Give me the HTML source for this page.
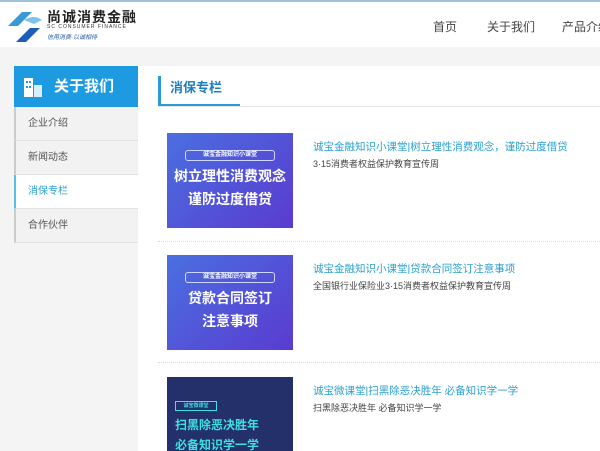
<!DOCTYPE html>
<html><head><meta charset="utf-8"><style>
*{margin:0;padding:0;box-sizing:border-box}
html,body{width:600px;height:451px;overflow:hidden}
body{background:#f4f4f4;font-family:"Liberation Sans","Noto Sans CJK SC",sans-serif;position:relative}
.hdr{position:absolute;left:0;top:0;width:600px;height:47px;background:#fff;border-top:2px solid #9fc3d6}
.nav{position:absolute;top:16px;font-size:12px;color:#444;white-space:nowrap}
.side{position:absolute;left:14px;top:66px;width:124px}
.sh{height:41px;background:#1e9be0;color:#fff;font-size:15px;font-weight:bold;line-height:41px;padding-left:40px;position:relative}
.mi{height:34px;background:#f2f2f2;border-left:2px solid #ccc;border-bottom:1px solid #e2e2e2;font-size:10px;color:#555;line-height:33px;padding-left:12px}
.mi.on{background:#fff;color:#2aa0d0;border-left-color:#5bbfe0}
.main{position:absolute;left:138px;top:66px;width:462px;height:385px;background:#fff;overflow:hidden}
.tt{position:absolute;left:20px;top:10px;height:30px;border-left:3px solid #2a9bd8;padding-left:9px;font-size:13px;font-weight:bold;color:#1b7fc0;line-height:24px}
.ul{position:absolute;left:20px;top:38px;width:82px;height:2px;background:#2a9bd8}
.gl{position:absolute;left:20px;top:40px;width:442px;height:1px;background:#e5e5e5}
.item{position:absolute;left:29px;width:433px}
.img{position:absolute;left:0;top:0;width:126px;height:95px;color:#fff;text-align:center;font-weight:bold}
.t1{position:absolute;left:146px;top:6px;font-size:10.5px;color:#2aa0d0;white-space:nowrap}
.t2{position:absolute;left:146px;top:24px;font-size:9px;color:#444;white-space:nowrap}
.sep{position:absolute;left:20px;width:442px;border-top:1px dotted #ddd}
</style></head><body>
<div class="hdr">
<svg style="position:absolute;left:4px;top:4px" width="40" height="40" viewBox="0 0 40 40"><path d="M4 20 L18 6 L28 6 L14 20 Z" fill="#3a9ad8"/><path d="M12 36 L26 22 L36 22 L22 36 Z" fill="#1d5fb8"/><path d="M20 14 Q30 8 38 14 L30 18 Z" fill="#7bc3ee"/></svg>
<div style="position:absolute;left:47px;top:5px;font-size:14px;font-weight:bold;color:#222;letter-spacing:1px">尚诚消费金融</div>
<div style="position:absolute;left:47px;top:22px;font-size:5px;color:#333;letter-spacing:1px">SC CONSUMER FINANCE</div>
<div style="position:absolute;left:47px;top:30px;font-size:6px;color:#2a5aa8;font-style:italic">信用消费·以诚相待</div>
<div class="nav" style="left:433px">首页</div>
<div class="nav" style="left:487px">关于我们</div>
<div class="nav" style="left:562px">产品介绍</div>
</div>
<div class="side">
<div class="sh"><svg style="position:absolute;left:10px;top:12px" width="24" height="20"><rect x="0" y="0" width="9" height="19" fill="#fff"/><rect x="10" y="7" width="8" height="12" fill="#d8eefa"/><rect x="2" y="3" width="2" height="2" fill="#1e9be0"/><rect x="5" y="3" width="2" height="2" fill="#1e9be0"/><rect x="2" y="8" width="2" height="2" fill="#1e9be0"/><rect x="5" y="8" width="2" height="2" fill="#1e9be0"/></svg>关于我们</div>
<div class="mi">企业介绍</div>
<div class="mi">新闻动态</div>
<div class="mi on">消保专栏</div>
<div class="mi">合作伙伴</div>
</div>
<div class="main">
<div class="tt">消保专栏</div><div class="ul"></div><div class="gl"></div>
<div class="item" style="top:67px">
<div class="img" style="background:linear-gradient(135deg,#4a6fe0,#5a3bd0)"><div style="margin:17px auto 0;width:90px;border:1px solid #cfd6ff;border-radius:3px;font-size:6px;line-height:9px">诚宝金融知识小课堂</div><div style="font-size:14px;margin-top:5px">树立理性消费观念</div><div style="font-size:14px;margin-top:3px">谨防过度借贷</div></div>
<div class="t1">诚宝金融知识小课堂|树立理性消费观念，谨防过度借贷</div>
<div class="t2">3·15消费者权益保护教育宣传周</div></div>
<div class="sep" style="top:175px"></div>
<div class="item" style="top:189px">
<div class="img" style="background:linear-gradient(135deg,#4a6fe0,#5a3bd0)"><div style="margin:17px auto 0;width:90px;border:1px solid #cfd6ff;border-radius:3px;font-size:6px;line-height:9px">诚宝金融知识小课堂</div><div style="font-size:14px;margin-top:5px">贷款合同签订</div><div style="font-size:14px;margin-top:3px">注意事项</div></div>
<div class="t1">诚宝金融知识小课堂|贷款合同签订注意事项</div>
<div class="t2">全国银行业保险业3·15消费者权益保护教育宣传周</div></div>
<div class="sep" style="top:296px"></div>
<div class="item" style="top:311px">
<div class="img" style="background:#23306a;text-align:left;padding-left:8px;color:#3ee0e0"><div style="margin-top:24px;width:42px;border:1px solid #3ee0e0;font-size:5px;line-height:8px;text-align:center">诚宝微课堂</div><div style="font-size:12px;margin-top:5px">扫黑除恶决胜年</div><div style="font-size:12px;margin-top:3px">必备知识学一学</div></div>
<div class="t1">诚宝微课堂|扫黑除恶决胜年 必备知识学一学</div>
<div class="t2">扫黑除恶决胜年 必备知识学一学</div></div>
</div>
</body></html>
